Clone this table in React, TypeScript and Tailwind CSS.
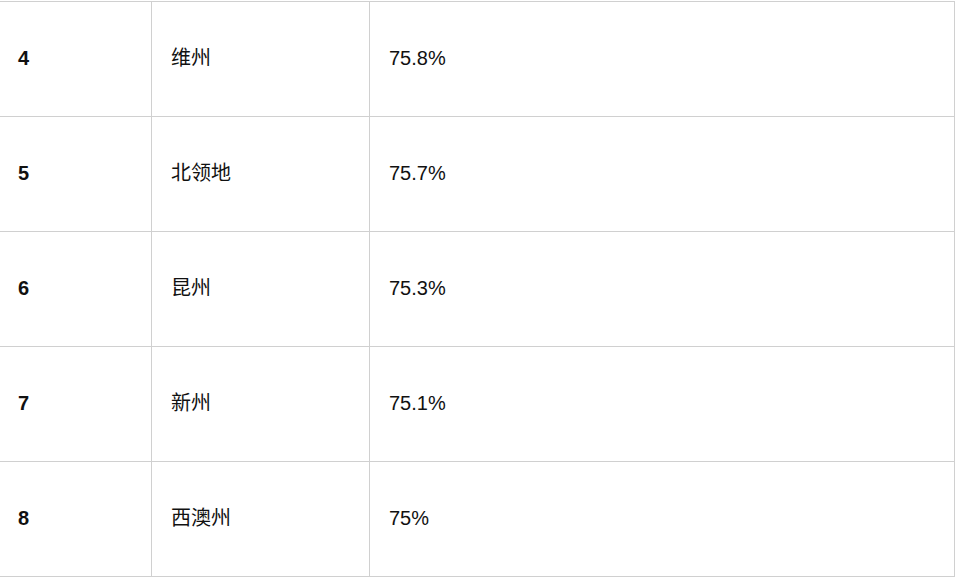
const rows = [
  { rank: '4', name: '维州', value: '75.8%' },
  { rank: '5', name: '北领地', value: '75.7%' },
  { rank: '6', name: '昆州', value: '75.3%' },
  { rank: '7', name: '新州', value: '75.1%' },
  { rank: '8', name: '西澳州', value: '75%' },
];

export default function App() {
  return (
    <div className="bg-white w-[956px] h-[581px] pt-px font-['Liberation_Sans','Noto_Sans_CJK_SC',sans-serif] text-[20px] text-[#111]">
      <div className="w-[955px] border-t border-r border-[#d0d0d0]">
        {rows.map((r) => (
          <div key={r.rank} className="flex h-[115px] border-b border-[#d0d0d0]">
            <div className="w-[151px] flex items-center pl-[18px] pb-[2px] font-bold">{r.rank}</div>
            <div className="w-[218px] flex items-center pl-[19px] pb-[2px] border-l border-[#d0d0d0]">{r.name}</div>
            <div className="flex-1 flex items-center pl-[19px] pb-[2px] border-l border-[#d0d0d0]">{r.value}</div>
          </div>
        ))}
      </div>
    </div>
  );
}
